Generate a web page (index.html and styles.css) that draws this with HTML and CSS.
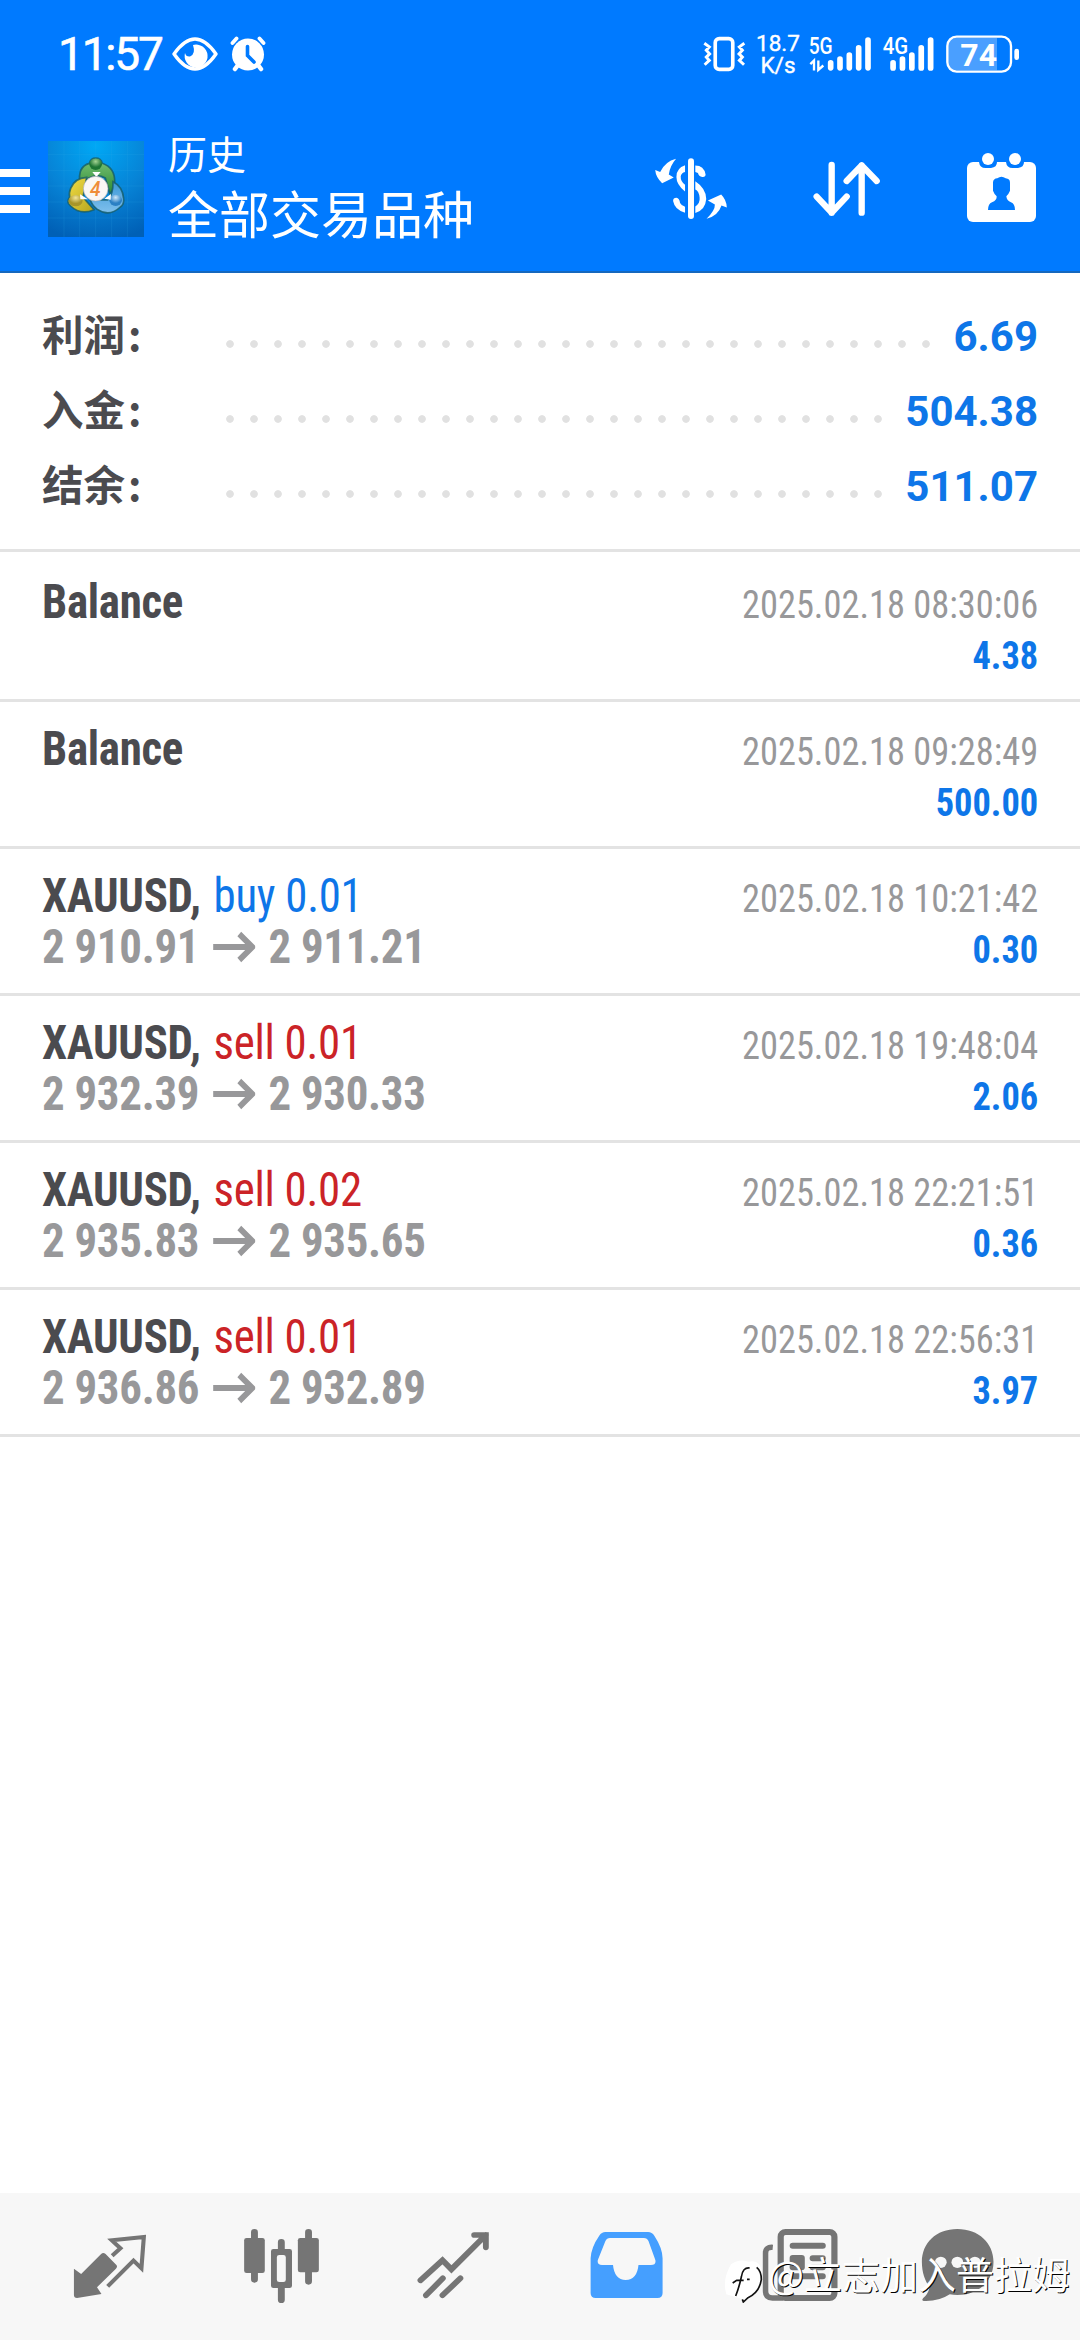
FILE: index.html
```html
<!DOCTYPE html>
<html lang="zh-CN">
<head>
<meta charset="utf-8">
<title>历史</title>
<link rel="stylesheet" href="styles.css">
</head>
<body>
<header class="header">
  <div class="status">
    <span class="clock">11:57</span>
    <svg class="eye" viewBox="0 0 46 34"><path d="M2 17Q23-13 44 17Q23 47 2 17Z" fill="none" stroke="#fff" stroke-width="3.4" stroke-linejoin="round"/><path d="M21 8A11.500 11.500 0 1 1 13 16Q14 20 18 19.500Q24 17 21 8Z" fill="#fff"/></svg>
    <svg class="alarm" viewBox="0 0 36 36"><g stroke="#fff" stroke-linecap="round" fill="none"><path d="M2.500 7L6.500 2.500M29.500 2.500L33.500 7" stroke-width="3.800"/><path d="M8 29L5 33M28 29L31 33" stroke-width="4.500"/></g><circle cx="18" cy="18.500" r="16" fill="#fff"/><path d="M17.500 10.500V19.500L24 26" fill="none" stroke="#007aff" stroke-width="3.600" stroke-linecap="round"/></svg>
    <svg class="vibrate" viewBox="188 104 130 116"><rect x="225" y="114" width="53" height="93" rx="12" fill="none" stroke="#fff" stroke-width="11"/><path d="M192 128L207 139L198 149L208 160L198 170L207 180L193 193M313 128L298 139L307 149L297 160L307 170L298 180L312 193" fill="none" stroke="#fff" stroke-width="9"/></svg>
    <span class="speed"><span>18.7</span><span>K/s</span></span>
    <svg class="signal five" viewBox="504 80 192 164"><text x="506" y="160" textLength="72" lengthAdjust="spacingAndGlyphs">5G</text><path d="M572 187V202M600 176V202M628 164V202M656 142V202M684 119V202" stroke="#fff" stroke-width="17" stroke-linecap="round"/><path d="M511 191L522 180V210M535 180V208L550 195" fill="none" stroke="#fff" stroke-width="7"/></svg>
    <svg class="signal four" viewBox="726 80 158 164"><text x="728" y="160" textLength="76" lengthAdjust="spacingAndGlyphs">4G</text><path d="M759 187V202M787 176V202M815 164V202M843 142V202M871 119V202" stroke="#fff" stroke-width="17" stroke-linecap="round"/></svg>
    <svg class="battery" viewBox="912 100 225 120"><path d="M940 112H1068V209H940Q921 207 921 184V137Q921 114 940 112Z" fill="#4a9fff"/><rect x="919" y="108" width="191" height="105" rx="28" fill="none" stroke="#fff" stroke-width="7"/><rect x="1120" y="144" width="14" height="34" rx="7" fill="#fff"/><text x="958" y="195" textLength="110" lengthAdjust="spacingAndGlyphs">74</text></svg>
  </div>
  <div class="toolbar">
    <svg class="menu" viewBox="0 0 30 44"><path d="M0 0h30v8H0zM0 18h30v8H0zM0 36h30v8H0z" fill="#fff"/></svg>
    <svg class="logo" viewBox="12 15 288 288">
      <defs>
        <radialGradient id="bg" cx=".5" cy=".05" r="1"><stop offset="0" stop-color="#00a8f5"/><stop offset=".55" stop-color="#0783d6"/><stop offset="1" stop-color="#0060b6"/></radialGradient>
        <linearGradient id="gr" x2="0" y2="1"><stop offset="0" stop-color="#7cc477"/><stop offset="1" stop-color="#2c8a35"/></linearGradient>
        <linearGradient id="ye" x2="1" y2="1"><stop offset="0" stop-color="#f3dd45"/><stop offset="1" stop-color="#b5a51e"/></linearGradient>
        <linearGradient id="bl" x2="0" y2="1"><stop offset="0" stop-color="#3a97d7"/><stop offset="1" stop-color="#7fc0ec"/></linearGradient>
        <radialGradient id="gb" cy=".25"><stop offset="0" stop-color="#a4d493"/><stop offset="1" stop-color="#1d7533"/></radialGradient>
        <radialGradient id="yb" cy=".25"><stop offset="0" stop-color="#f4e697"/><stop offset="1" stop-color="#a8952a"/></radialGradient>
        <radialGradient id="bb" cy=".25"><stop offset="0" stop-color="#cfe8fa"/><stop offset="1" stop-color="#2b80c4"/></radialGradient>
      </defs>
      <path d="M12 15h288v288H12z" fill="url(#bg)"/>
      <path d="M60 15v288M107 15v288M155 15v288M203 15v288M250 15v288M12 55h288M12 103h288M12 150h288M12 198h288M12 246h288" stroke="#38a9e8" stroke-opacity=".25" stroke-width="2"/>
      <g stroke="#155d68" stroke-opacity=".8" stroke-width="5">
        <path d="M108 142Q100 92 136 82Q140 66 155 66Q171 66 175 82Q214 96 212 140Q211 162 197 172L184 126Q153 108 108 142Z" fill="url(#gr)"/>
        <path d="M128 124Q92 126 80 157Q74 172 77 183Q65 199 80 210Q110 239 150 221L117 184Z" fill="url(#ye)"/>
        <path d="M207 137Q236 151 239 188Q241 205 229 213Q196 244 160 220Q144 208 139 192H191Q208 174 207 137Z" fill="url(#bl)"/>
      </g>
      <ellipse cx="155" cy="85" rx="19" ry="17" fill="url(#gb)"/><ellipse cx="95" cy="194" rx="21" ry="17" fill="url(#yb)"/><ellipse cx="215" cy="193" rx="19" ry="17" fill="url(#bb)"/>
      <path d="M108 175L132 190L109 190ZM181 188L201 174L200 191ZM145 108H170L157 123Z" fill="#fff"/>
      <circle cx="155" cy="158" r="37" fill="#faf7f5" stroke="#aaa" stroke-width="2"/>
      <text class="logo-number" x="154" y="179">4</text>
    </svg>
    <div class="titles"><span class="title-small">历史</span><span class="title-large">全部交易品种</span></div>
    <svg class="tool dollar" viewBox="36 51 228 190"><path d="M105 56Q72 64 57 96L42 90Q44 112 63 130L98 113L83 104Q86 78 105 56Z" fill="#fff"/><path d="M197 237Q223 211 222 194L201 182L241 164Q257 180 258 203L242 197Q232 228 197 237Z" fill="#fff"/><path d="M132 76Q106 84 106 111Q106 134 132 155V135Q118 124 119 109Q121 98 132 96ZM96 184Q96 174 106 174Q115 175 117 190Q121 198 132 201V219Q101 211 96 184ZM163 77Q189 77 194 104Q194 112 184 111Q173 109 171 99L163 96ZM163 124Q196 146 196 178Q193 212 163 220V200Q178 190 176 173Q174 154 163 149Z" fill="#fff"/><path d="M150 64V229" stroke="#fff" stroke-width="18" stroke-linecap="round"/></svg>
    <svg class="tool sort" viewBox="514 480 210 174"><path d="M573 495V638M528 590L573 638L618 590M663 638V496M618 543L663 496L708 543" fill="none" stroke="#fff" stroke-width="19" stroke-linecap="round" stroke-linejoin="round"/></svg>
    <svg class="tool calendar" viewBox="972 453 219 219"><rect x="978" y="486" width="207" height="180" rx="18" fill="#fff"/><path d="M1014 470V486Q1016 504 1034 504H1050Q1068 502 1068 486V470ZM1095 470V486Q1097 504 1115 504H1131Q1149 502 1149 486V470Z" fill="#007aff"/><circle cx="1041" cy="477" r="18" fill="#fff"/><circle cx="1122" cy="477" r="18" fill="#fff"/><path d="M1056 547Q1057 536 1069 535Q1081 526 1094 535Q1107 536 1107 548V572Q1102 584 1096 589Q1097 602 1110 607Q1122 612 1122 630H1041Q1041 612 1053 607Q1068 601 1067 589Q1060 583 1056 572Z" fill="#007aff"/></svg>
  </div>
</header>

<section class="summary">
  <div class="summary-row"><span class="label">利润<i>:</i></span><span class="dots"></span><span class="total">6.69</span></div>
  <div class="summary-row"><span class="label">入金<i>:</i></span><span class="dots"></span><span class="total">504.38</span></div>
  <div class="summary-row"><span class="label">结余<i>:</i></span><span class="dots"></span><span class="total">511.07</span></div>
</section>

<main class="deals">
  <article class="deal"><div class="main"><div class="symbol">Balance</div></div><div class="side"><time>2025.02.18 08:30:06</time><b>4.38</b></div></article>
  <article class="deal"><div class="main"><div class="symbol">Balance</div></div><div class="side"><time>2025.02.18 09:28:49</time><b>500.00</b></div></article>
  <article class="deal"><div class="main"><div class="symbol">XAUUSD, <span class="buy">buy 0.01</span></div><div class="prices">2 910.91<svg class="arrow" viewBox="0 0 45 34" ><path d="M0 17H41M28 4L42 17L28 30" fill="none" stroke="currentColor" stroke-width="6"/></svg>2 911.21</div></div><div class="side"><time>2025.02.18 10:21:42</time><b>0.30</b></div></article>
  <article class="deal"><div class="main"><div class="symbol">XAUUSD, <span class="sell">sell 0.01</span></div><div class="prices">2 932.39<svg class="arrow" viewBox="0 0 45 34"><path d="M0 17H41M28 4L42 17L28 30" fill="none" stroke="currentColor" stroke-width="6"/></svg>2 930.33</div></div><div class="side"><time>2025.02.18 19:48:04</time><b>2.06</b></div></article>
  <article class="deal"><div class="main"><div class="symbol">XAUUSD, <span class="sell">sell 0.02</span></div><div class="prices">2 935.83<svg class="arrow" viewBox="0 0 45 34"><path d="M0 17H41M28 4L42 17L28 30" fill="none" stroke="currentColor" stroke-width="6"/></svg>2 935.65</div></div><div class="side"><time>2025.02.18 22:21:51</time><b>0.36</b></div></article>
  <article class="deal"><div class="main"><div class="symbol">XAUUSD, <span class="sell">sell 0.01</span></div><div class="prices">2 936.86<svg class="arrow" viewBox="0 0 45 34"><path d="M0 17H41M28 4L42 17L28 30" fill="none" stroke="currentColor" stroke-width="6"/></svg>2 932.89</div></div><div class="side"><time>2025.02.18 22:56:31</time><b>3.97</b></div></article>
</main>

<nav class="tabs">
  <svg viewBox="70 39 499.5 441" preserveAspectRatio="none"><path d="M215 266L236 282L294 222Q300 216 307 222L339 256Q342 261 337 266L282 322L295 342L224 354Q215 354 215 345Z" fill="#757575"/><path d="M326 227L350 205L325 181L418 171L411 265L388 242L313 319" fill="none" stroke="#757575" stroke-width="12"/></svg>
  <svg viewBox="569.2 39 499.5 441" preserveAspectRatio="none"><path d="M739 157V298M896 157V304M817 187V215M817 318V359" stroke="#757575" stroke-width="20" stroke-linecap="round"/><rect x="709" y="174" width="60" height="105" rx="7" fill="#757575"/><rect x="865" y="174" width="61" height="103" rx="7" fill="#757575"/><path d="M794 207H841Q848 207 848 214V317Q848 324 841 324H794Q787 324 787 317V214Q787 207 794 207ZM811 225Q804 225 804 232V299Q804 306 811 306H823Q830 306 830 299V232Q830 225 823 225Z" fill="#757575" fill-rule="evenodd"/></svg>
  <svg viewBox="1068.7 39 499.500 441" preserveAspectRatio="none"><path d="M1221 301L1285 241L1311 268L1411 165M1377 165H1411V202M1237 346L1286 295M1285 346L1337 295" fill="none" stroke="#757575" stroke-width="17" stroke-linecap="round" stroke-linejoin="miter"/></svg>
  <svg viewBox="0 39 499.5 441" preserveAspectRatio="none"><path d="M190 156H314Q325 156 332 167Q356 205 356 235V339Q356 354 341 354H162Q147 354 147 339V235Q148 203 172 167Q179 156 190 156ZM203 174Q194 174 190 183L168 240Q165 255 180 255H212Q216 299 249 300Q282 299 286 255H322Q338 255 335 240L315 183Q311 174 302 174Z" fill="#459fff" fill-rule="evenodd"/></svg>
  <svg viewBox="499.5 39 499.5 441" preserveAspectRatio="none"><rect x="699" y="156" width="156" height="198" rx="14" fill="none" stroke="#757575" stroke-width="18"/><path d="M676 202Q655 200 655 220V334Q655 354 675 354H705" fill="none" stroke="#757575" stroke-width="16"/><path d="M734 197H821M792 235H821M792 262H821M734 289H821" stroke="#757575" stroke-width="18" stroke-linecap="round"/><rect x="725" y="225" width="44" height="46" rx="9" fill="#757575"/></svg>
  <svg viewBox="999 39 499.5 441" preserveAspectRatio="none"><path d="M1212 147C1274 147 1317 189 1317 246S1274 345 1212 345Q1200 345 1190 343Q1158 365 1114 363Q1107 361 1113 354Q1126 344 1132 321C1118 304 1109 277 1109 246C1109 189 1150 147 1212 147Z" fill="#757575"/><g fill="#f7f7f7"><circle cx="1164" cy="247" r="17"/><circle cx="1212" cy="247" r="17"/><circle cx="1263" cy="247" r="17"/></g></svg>
</nav>
<div class="watermark"><svg viewBox="42 115 120 135"><path d="M66 134Q90 116 118 126Q157 118 159 165Q159 213 116 232L103 247L98 237L52 224Q39 180 66 134Z" fill="#fff"/><path d="M80 229Q90 204 97 172Q101 142 122 145M71 190L83 182H104M114 179H122M143 143Q157 154 157 180Q151 219 117 234L103 247L100 239" fill="none" stroke="#111" stroke-width="5"/></svg><span>@立志加入普拉姆</span></div>
</body>
</html>
```
FILE: styles.css
```css
* { box-sizing: border-box; }
body {
  margin: 0;
  width: 1080px;
  height: 2340px;
  display: flex;
  flex-direction: column;
  position: relative;
  overflow: hidden;
  background: #fff;
  font-family: Roboto, "Noto Sans CJK SC", sans-serif;
}
svg { display: block; flex: none; }

.header {
  height: 273px;
  background: #007aff;
  border-bottom: 2px solid #1668be;
  color: #fff;
}
.status { height: 108px; display: flex; align-items: center; padding-left: 58px; }
.clock { width: 114px; font-size: 46px; font-weight: 400; letter-spacing: -2.2px; line-height: 54px; -webkit-text-stroke: .6px #fff; }
.eye { width: 46px; height: 34px; }
.alarm { width: 36px; height: 36px; margin-left: 12px; }
.vibrate { width: 43px; height: 39px; margin-left: 437px; }
.speed { width: 44px; margin-left: 10px; display: flex; flex-direction: column; align-items: center; font-size: 22.5px; line-height: 22px; font-weight: 400; -webkit-text-stroke: .4px #fff; }
.signal { height: 55px; }
.signal text { font-size: 70px; font-weight: 500; fill: #fff; }
.five { width: 64px; margin-left: 8px; }
.four { width: 53px; margin-left: 10px; }
.battery { width: 75px; height: 40px; margin-left: 10px; }
.battery text { font-size: 96px; font-weight: 700; fill: #fff; }

.toolbar { height: 163px; display: flex; align-items: flex-start; }
.menu { width: 30px; height: 44px; margin-top: 61px; }
.logo { width: 96px; height: 96px; margin: 33px 0 0 18px; }
.logo-number { font-size: 58px; font-weight: 500; font-style: italic; fill: #ef8d3a; text-anchor: middle; }
.titles { width: 485px; margin: 14px 0 0 24px; display: flex; flex-direction: column; font-family: "Noto Sans CJK SC", sans-serif; line-height: 60px; }
.title-small { font-size: 39px; }
.title-large { font-size: 51px; }
.dollar { width: 76px; height: 63px; margin-top: 49px; }
.sort { width: 70px; height: 58px; margin: 52px 0 0 83px; }
.calendar { width: 73px; height: 73px; margin: 43px 0 0 83px; }

.summary { height: 279px; padding: 26px 42px 25px 42px; border-bottom: 3px solid #e3e3e3; }
.summary-row { height: 75px; display: flex; align-items: center; }
.label { width: 176px; font: 700 41.5px/68px "Noto Sans CJK SC", sans-serif; color: #4b4b4f; padding-bottom: 7px; }
.label i { font-style: normal; margin-left: 3px; }
.dots { flex: 1; height: 75px; margin-right: 15px; background: radial-gradient(circle at 12px 45px, #e1e1e1 3.4px, transparent 4.2px) 0 0 / 24px 75px repeat-x; }
.total { font-size: 42px; font-weight: 700; line-height: 75px; color: #0e76e8; }

.deals { flex: none; border-bottom: 3px solid #e3e3e3; font-family: "Roboto Condensed", Roboto, sans-serif; }
.deal { height: 147px; display: flex; justify-content: space-between; padding: 21px 42px 0 42px; border-top: 3px solid #e3e3e3; }
.deal:first-child { border-top-color: #fff; }
.main { font-size: 48px; line-height: 51px; font-weight: 700; letter-spacing: -.3px; transform: scaleX(.935); transform-origin: left; }
.symbol { color: #4b4b4f; white-space: pre; }
.symbol span { font-weight: 400; margin-left: 3px; }
.buy { color: #0e76e8; }
.sell { color: #cb2327; }
.prices { display: flex; align-items: center; color: #98989a; }
.arrow { width: 45px; height: 34px; margin: 0 14px 0 15px; }
.side { display: flex; flex-direction: column; align-items: flex-end; padding-top: 4px; font-size: 39px; line-height: 51px; transform: scaleX(.934); transform-origin: right; }
.side time { color: #98989a; }
.side b { color: #0e76e8; }

.tabs { height: 147px; margin-top: auto; padding-left: 24px; display: flex; background: #f7f7f7; }
.tabs svg { width: 172px; height: 147px; }

.watermark { position: absolute; left: 723px; top: 2248px; display: flex; align-items: flex-start; color: #fff; font: 38px/50px "Noto Sans CJK SC", sans-serif; text-shadow: 1px 1px 0 #000; white-space: nowrap; }
.watermark svg { width: 40px; height: 45px; margin: 10px 5px 0 0; }
```
